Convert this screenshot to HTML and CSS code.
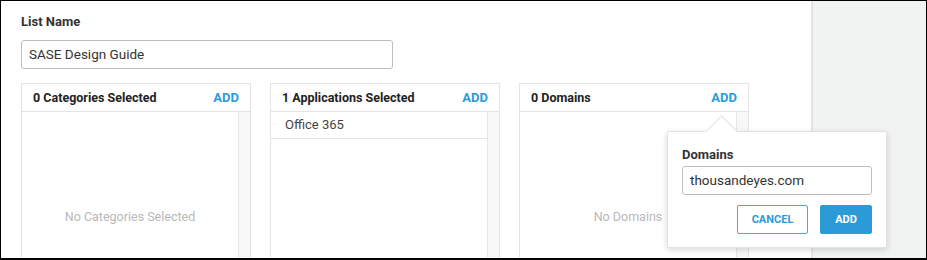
FILE: index.html
```html
<!DOCTYPE html>
<html lang="en">
<head>
    <meta charset="UTF-8">
    <title>List Name</title>
    <link rel="stylesheet" href="styles.css">
</head>
<body>
    <div class="frame">
        <div class="main">
            <div class="field-label">List Name</div>
            <div class="text-input wide">SASE Design Guide</div>

            <div class="panels">
                <div class="panel">
                    <div class="panel-head">
                        <span>0 Categories Selected</span>
                        <span class="add-link">ADD</span>
                    </div>
                    <div class="panel-body">
                        <div class="list">
                            <div class="empty">No Categories Selected</div>
                        </div>
                        <div class="scroll"></div>
                    </div>
                </div>

                <div class="panel">
                    <div class="panel-head">
                        <span>1 Applications Selected</span>
                        <span class="add-link">ADD</span>
                    </div>
                    <div class="panel-body">
                        <div class="list">
                            <div class="row">Office 365</div>
                        </div>
                        <div class="scroll"></div>
                    </div>
                </div>

                <div class="panel">
                    <div class="panel-head">
                        <span>0 Domains</span>
                        <span class="add-link">ADD</span>
                    </div>
                    <div class="panel-body">
                        <div class="list">
                            <div class="empty">No Domains</div>
                        </div>
                        <div class="scroll"></div>
                    </div>

                    <div class="popover">
                        <div class="popover-arrow"></div>
                        <div class="field-label">Domains</div>
                        <div class="text-input">thousandeyes.com</div>
                        <div class="popover-actions">
                            <div class="btn btn-outline">CANCEL</div>
                            <div class="btn btn-primary">ADD</div>
                        </div>
                    </div>
                </div>
            </div>
        </div>
        <div class="aside"></div>
    </div>
</body>
</html>
```

FILE: styles.css
```css
html, body {
    margin: 0;
    font-family: Roboto, "Liberation Sans", Arial, sans-serif;
    color: #333;
}

.frame {
    width: 927px;
    height: 260px;
    box-sizing: border-box;
    border: 1px solid #000;
    border-bottom-width: 2px;
    display: flex;
    overflow: hidden;
}

.main {
    width: 810px;
    flex-shrink: 0;
    box-sizing: border-box;
    padding: 13px 20px 0;
    background-color: #fff;
}

.aside {
    flex: 1;
    background-color: #f1f2f2;
    border-left: 2px solid #e4e4e4;
}

.field-label {
    font-size: 13px;
    font-weight: 700;
    line-height: 16px;
    color: #333;
}

.text-input {
    margin-top: 10px;
    height: 29px;
    box-sizing: border-box;
    border: 1px solid #bdbdbd;
    border-radius: 3px;
    padding: 0 7px;
    font-size: 13.5px;
    line-height: 27px;
    color: #333;
}

.text-input.wide {
    width: 372px;
}

.panels {
    margin-top: 14px;
    display: grid;
    grid-template-columns: repeat(3, 230px);
    gap: 19px;
}

.panel {
    position: relative;
    border: 1px solid #e4e4e4;
}

.panel-head {
    height: 27px;
    padding: 0 11px;
    display: flex;
    align-items: center;
    justify-content: space-between;
    border-bottom: 1px solid #e4e4e4;
    font-size: 12.5px;
    font-weight: 700;
    color: #222;
}

.add-link {
    color: #2b9bd7;
    font-size: 13px;
}

.panel-body {
    display: flex;
    height: 208px;
}

.list {
    flex: 1;
    display: flex;
    flex-direction: column;
}

.row {
    height: 26px;
    padding-left: 14px;
    border-bottom: 1px solid #e4e4e4;
    font-size: 13px;
    line-height: 26px;
    color: #444;
}

.empty {
    margin: auto;
    font-size: 12.5px;
    color: #b8b8b8;
}

.scroll {
    width: 11px;
    background-color: #f8f8f8;
    border-left: 1px solid #e6e6e6;
}

.popover {
    position: absolute;
    left: 147px;
    top: 47px;
    width: 220px;
    box-sizing: border-box;
    padding: 14px 14px 13px;
    background-color: #fff;
    border: 1px solid #e2e2e2;
    border-radius: 2px;
    box-shadow: 0 2px 6px rgba(0, 0, 0, 0.15);
}

.popover-arrow {
    position: absolute;
    left: 42px;
    top: -12px;
    width: 22px;
    height: 22px;
    background-color: #fff;
    border-top: 1px solid #e2e2e2;
    border-left: 1px solid #e2e2e2;
    transform: rotate(45deg);
}

.popover .field-label {
    position: relative;
    margin-top: 1px;
}

.popover .text-input {
    margin-top: 3px;
}

.popover-actions {
    margin-top: 10px;
    display: flex;
    justify-content: flex-end;
    gap: 12px;
}

.btn {
    height: 29px;
    box-sizing: border-box;
    border-radius: 2px;
    font-size: 11px;
    font-weight: 700;
    line-height: 27px;
    text-align: center;
}

.btn-outline {
    width: 71px;
    border: 1px solid #4aa9dc;
    color: #2b9bd7;
    background-color: #fff;
}

.btn-primary {
    width: 52px;
    border: 1px solid #2b9bd7;
    background-color: #2b9bd7;
    color: #fff;
}
```
